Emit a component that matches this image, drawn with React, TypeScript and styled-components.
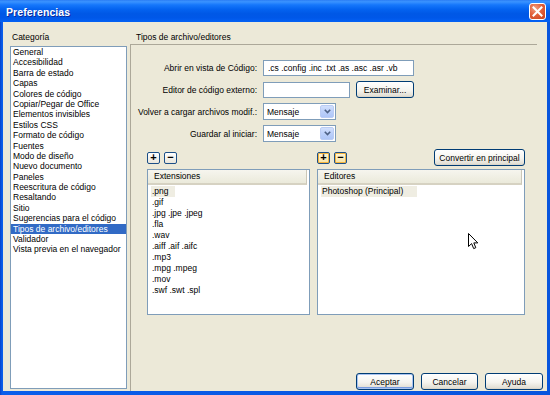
import styled, { createGlobalStyle } from "styled-components"

const GlobalStyle = createGlobalStyle`
  html, body { margin: 0; padding: 0; background: #fff; }
  body {
    font-family: "Liberation Sans", Arial, sans-serif;
    font-size: 8.5px;
    color: #000;
  }
  * { box-sizing: border-box; }
`

const categories = [
  "General",
  "Accesibilidad",
  "Barra de estado",
  "Capas",
  "Colores de código",
  "Copiar/Pegar de Office",
  "Elementos invisibles",
  "Estilos CSS",
  "Formato de código",
  "Fuentes",
  "Modo de diseño",
  "Nuevo documento",
  "Paneles",
  "Reescritura de código",
  "Resaltando",
  "Sitio",
  "Sugerencias para el código",
  "Tipos de archivo/editores",
  "Validador",
  "Vista previa en el navegador",
]

const extensions = [
  ".png",
  ".gif",
  ".jpg .jpe .jpeg",
  ".fla",
  ".wav",
  ".aiff .aif .aifc",
  ".mp3",
  ".mpg .mpeg",
  ".mov",
  ".swf .swt .spl",
]

const Chevron = () => (
  <DropArrow>
    <svg width="7" height="5" viewBox="0 0 7 5">
      <path d="M0.8 0.8 L3.5 3.6 L6.2 0.8" stroke="#4D6185" strokeWidth="1.6" fill="none" />
    </svg>
  </DropArrow>
)

const App = () => {
  return (
    <>
      <GlobalStyle />
      <Window>
        <TitleBar>
          <Title>Preferencias</Title>
          <CloseButton>
            <svg width="11" height="11" viewBox="0 0 11 11">
              <path d="M1.5 1.5 L9.5 9.5 M9.5 1.5 L1.5 9.5" stroke="#fff" strokeWidth="2" strokeLinecap="square" />
            </svg>
          </CloseButton>
        </TitleBar>
        <Body>
          <LeftCol>
            <SectionLabel>Categoría</SectionLabel>
            <CategoryList>
              {categories.map((c) => (
                <CategoryItem key={c} selected={c === "Tipos de archivo/editores"}>
                  {c}
                </CategoryItem>
              ))}
            </CategoryList>
          </LeftCol>
          <RightCol>
            <Heading>Tipos de archivo/editores</Heading>
            <Panel>
              <Form>
                <FieldLabel>Abrir en vista de Código:</FieldLabel>
                <Field>
                  <TextBox width={151}>.cs .config .inc .txt .as .asc .asr .vb</TextBox>
                </Field>
                <FieldLabel>Editor de código externo:</FieldLabel>
                <Field>
                  <TextBox width={87} />
                  <Button width={58}>Examinar...</Button>
                </Field>
                <FieldLabel>Volver a cargar archivos modif.:</FieldLabel>
                <Field>
                  <Select>
                    <span>Mensaje</span>
                    <Chevron />
                  </Select>
                </Field>
                <FieldLabel>Guardar al iniciar:</FieldLabel>
                <Field>
                  <Select>
                    <span>Mensaje</span>
                    <Chevron />
                  </Select>
                </Field>
              </Form>
              <Lists>
                <ListColumn>
                  <Toolbar>
                    <SmallButton>+</SmallButton>
                    <SmallButton>−</SmallButton>
                  </Toolbar>
                  <ListBox>
                    <ListHeader>Extensiones</ListHeader>
                    <Rows>
                      {extensions.map((e, i) => (
                        <Row key={e}>
                          <RowText active={i === 0}>{e}</RowText>
                        </Row>
                      ))}
                    </Rows>
                  </ListBox>
                </ListColumn>
                <ListColumn>
                  <Toolbar>
                    <SmallButton hot>+</SmallButton>
                    <SmallButton hot>−</SmallButton>
                    <Button width={91} push>Convertir en principal</Button>
                  </Toolbar>
                  <ListBox>
                    <ListHeader>Editores</ListHeader>
                    <Rows>
                      <Row>
                        <RowText active wide>Photoshop (Principal)</RowText>
                      </Row>
                    </Rows>
                    <Cursor width="11" height="17" viewBox="0 0 11 17">
                      <path
                        d="M0.5 0.5 L0.5 13.5 L3.6 10.6 L5.7 15.6 L7.8 14.7 L5.8 9.9 L9.8 9.9 Z"
                        fill="#fff"
                        stroke="#000"
                        strokeWidth="1"
                      />
                    </Cursor>
                  </ListBox>
                </ListColumn>
              </Lists>
              <ButtonRow>
                <Button width={58} primary>Aceptar</Button>
                <Button width={57}>Cancelar</Button>
                <Button width={58}>Ayuda</Button>
              </ButtonRow>
            </Panel>
          </RightCol>
        </Body>
      </Window>
    </>
  )
}
export default App

const Window = styled.div`
width: 550px;
height: 395px;
display: flex;
flex-direction: column;
background: linear-gradient(to right, #0842C9 0px, #0A5EEB 2px, #0855DD 100%);
overflow: hidden;
`

const TitleBar = styled.div`
height: 22px;
flex: none;
display: flex;
align-items: center;
justify-content: space-between;
padding: 1px 4px 0 6px;
background: linear-gradient(to bottom, #2B7DF4 0%, #3A93FF 8%, #1677FB 22%, #0463F0 42%, #0058E6 62%, #0057E8 80%, #0461F4 100%);
`

const Title = styled.span`
color: #fff;
font-weight: bold;
font-size: 10.5px;
letter-spacing: 0.1px;
text-shadow: 1px 1px 0 #0C2A9A;
`

const CloseButton = styled.div`
width: 17px;
height: 17px;
display: flex;
align-items: center;
justify-content: center;
border: 1px solid #fff;
border-radius: 3px;
background: radial-gradient(circle at 35% 30%, #F0A083 0%, #E2613C 45%, #C8401A 100%);
`

const Body = styled.div`
flex: 1;
display: flex;
margin: 0 3px 4px 3px;
padding: 10px 0 0 7px;
background: #ECE9D8;
`

const LeftCol = styled.div`
width: 117px;
display: flex;
flex-direction: column;
padding-bottom: 2px;
`

const SectionLabel = styled.div`
height: 11px;
line-height: 11px;
padding-left: 2px;
margin-bottom: 3px;
`

const CategoryList = styled.div`
flex: 1;
background: #fff;
border: 1px solid #7F9DB9;
`

const CategoryItem = styled.div<{ selected?: boolean }>`
height: 10.4px;
line-height: 10.4px;
padding-left: 2px;
white-space: nowrap;
background: ${(p) => (p.selected ? "#316AC5" : "transparent")};
color: ${(p) => (p.selected ? "#fff" : "#000")};
`

const RightCol = styled.div`
flex: 1;
display: flex;
flex-direction: column;
margin-left: 3px;
`

const Heading = styled.div`
height: 12px;
line-height: 11px;
padding-left: 6px;
`

const Panel = styled.div`
flex: 1;
display: flex;
flex-direction: column;
border-top: 1px solid #ACA899;
border-left: 1px solid #ACA899;
margin-right: 10px;
padding: 14px 0 0 16px;
`

const Form = styled.div`
display: grid;
grid-template-columns: 126px auto;
grid-auto-rows: 17px;
column-gap: 6px;
row-gap: 5px;
margin-left: -16px;
`

const FieldLabel = styled.div`
align-self: center;
text-align: right;
white-space: nowrap;
`

const Field = styled.div`
display: flex;
align-items: center;
gap: 6px;
`

const TextBox = styled.div<{ width: number }>`
width: ${(p) => p.width}px;
height: 16px;
line-height: 14px;
padding: 0 4px;
background: #fff;
border: 1px solid #7F9DB9;
white-space: nowrap;
overflow: hidden;
`

const Select = styled.div`
width: 73px;
height: 17px;
display: flex;
align-items: center;
justify-content: space-between;
padding: 1px 1px 1px 3px;
background: #fff;
border: 1px solid #7F9DB9;
`

const DropArrow = styled.div`
width: 14px;
height: 13px;
display: flex;
align-items: center;
justify-content: center;
border: 1px solid #BACCF4;
border-radius: 2px;
background: linear-gradient(to bottom, #D2E0FD 0%, #BCD0FA 50%, #AEC6F7 100%);
`

const Button = styled.div<{ width: number; primary?: boolean; push?: boolean }>`
width: ${(p) => p.width}px;
height: 17px;
display: flex;
align-items: center;
justify-content: center;
flex: none;
white-space: nowrap;
margin-left: ${(p) => (p.push ? "auto" : "0")};
border: 1px solid #003C74;
border-radius: 3px;
background: linear-gradient(to bottom, #FFFFFF 0%, #F5F4EF 55%, #E3E0D6 90%, #D6D0C5 100%);
box-shadow: ${(p) => (p.primary ? "inset 0 0 0 1px #A9C3F0, inset 0 -1px 0 1px #7A9DE0" : "none")};
`

const Lists = styled.div`
display: grid;
grid-template-columns: 163px 208px;
column-gap: 7px;
margin-top: 7px;
`

const ListColumn = styled.div`
display: flex;
flex-direction: column;
gap: 3px;
`

const Toolbar = styled.div`
height: 17px;
display: flex;
align-items: center;
gap: 4px;
`

const SmallButton = styled.div<{ hot?: boolean }>`
width: 13px;
height: 12px;
display: flex;
align-items: center;
justify-content: center;
font-size: 11px;
font-weight: bold;
line-height: 1;
border: 1px solid #1C4F87;
border-radius: 2px;
background: ${(p) => (p.hot ? "linear-gradient(#FFF7DA, #F7E3A4)" : "linear-gradient(#FFFFFF, #E9E6DC)")};
box-shadow: ${(p) => (p.hot ? "inset 0 0 0 1px #F5B43C" : "none")};
`

const ListBox = styled.div`
position: relative;
height: 146px;
background: #fff;
border: 1px solid #7F9DB9;
`

const ListHeader = styled.div`
height: 15px;
line-height: 13px;
padding-left: 6px;
width: calc(100% - 2px);
background: linear-gradient(to bottom, #F6F5EE 0%, #EBEADB 100%);
border-bottom: 2px solid #D6D2C2;
border-right: 1px solid #CBC7B8;
`

const Rows = styled.div`
padding: 1px 0 0 3px;
`

const Row = styled.div`
height: 11px;
line-height: 11px;
white-space: nowrap;
`

const RowText = styled.span<{ active?: boolean; wide?: boolean }>`
display: inline-block;
height: 11px;
padding: 0 ${(p) => (p.wide ? "14px" : "6px")} 0 1px;
background: ${(p) => (p.active ? "#EFEDE2" : "transparent")};
`

const Cursor = styled.svg`
position: absolute;
left: 150px;
top: 63px;
`

const ButtonRow = styled.div`
margin-top: auto;
margin-right: -6px;
margin-bottom: 1px;
display: flex;
justify-content: flex-end;
gap: 7px;
`
